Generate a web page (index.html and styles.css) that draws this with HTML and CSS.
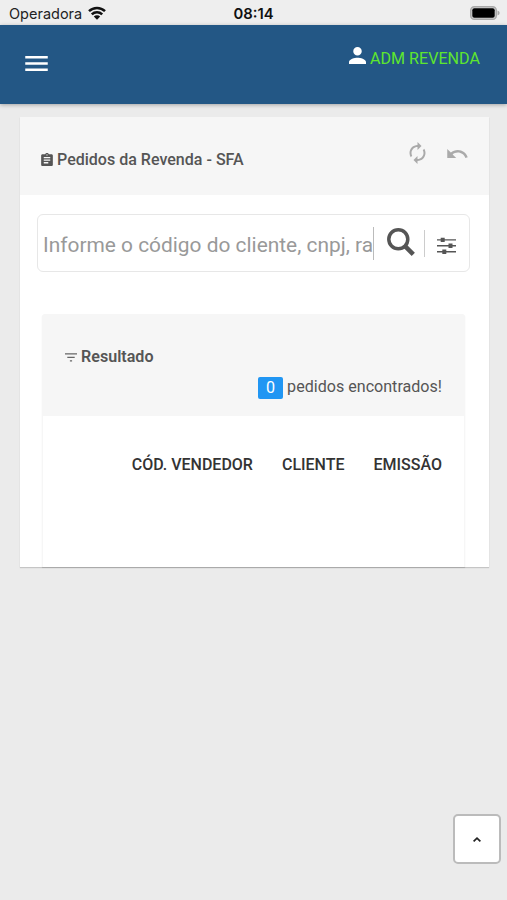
FILE: index.html
```html
<!DOCTYPE html>
<html lang="pt-BR">
<head>
<meta charset="utf-8">
<title>Pedidos da Revenda - SFA</title>
<link rel="stylesheet" href="styles.css">
</head>
<body>
<div class="status">
  <div class="carrier"><span>Operadora</span>
    <svg class="wifi" viewBox="0 0 18 14" fill="none" stroke="#111" stroke-width="2.5"><path d="M1 5.2a11.6 11.6 0 0 1 16 0M3.8 8.3a7.5 7.5 0 0 1 10.4 0"/><path d="M9 13.8L5.8 10.6a4.6 4.6 0 0 1 6.4 0z" fill="#111" stroke="none"/></svg>
  </div>
  <time class="clock">08:14</time>
  <svg class="battery" viewBox="0 0 30 14"><rect x=".75" y=".75" width="25.5" height="12.5" rx="3.6" fill="#d4d4d4" stroke="#a9a9a9" stroke-width="1.5"/><rect x="2.3" y="2.3" width="22.4" height="9.4" rx="2" fill="#000"/><path d="M27.5 4.6q2.2.8 2.2 2.4t-2.2 2.4z" fill="#a9a9a9"/></svg>
</div>
<header class="bar">
  <svg class="menu" viewBox="3 6 18 12" fill="#fff"><path d="M3 18h18v-2H3v2zm0-5h18v-2H3v2zm0-7v2h18V6H3z"/></svg>
  <div class="user">
    <svg class="person" viewBox="4 4 16 16" fill="#fff"><path d="M12 12c2.21 0 4-1.79 4-4s-1.79-4-4-4-4 1.79-4 4 1.79 4 4 4zm0 2c-2.67 0-8 1.34-8 4v2h16v-2c0-2.66-5.33-4-8-4z"/></svg>
    <span>ADM REVENDA</span>
  </div>
</header>
<main class="card">
  <div class="card-head">
    <svg class="clip" viewBox="3 1 18 20" fill="#555"><path d="M19 3h-4.180C14.4 1.840 13.3 1 12 1c-1.300 0-2.400.840-2.820 2H5c-1.100 0-2 .900-2 2v14c0 1.100.900 2 2 2h14c1.100 0 2-.900 2-2V5c0-1.100-.900-2-2-2zm-7 0c.550 0 1 .450 1 1s-.450 1-1 1-1-.450-1-1 .450-1 1-1zm2 14H7v-2h7v2zm3-4H7v-2h10v2zm0-4H7V7h10v2z"/></svg>
    <h1 class="title">Pedidos da Revenda - SFA</h1>
    <div class="actions">
      <svg class="renew" viewBox="4 1 16 22" fill="#aaa"><path d="M12 6v3l4-4-4-4v3c-4.420 0-8 3.580-8 8 0 1.570.460 3.030 1.240 4.260L6.700 14.800C6.250 13.970 6 13.010 6 12c0-3.310 2.690-6 6-6zm6.760 1.740L17.300 9.200c.440.840.700 1.790.700 2.800 0 3.310-2.690 6-6 6v-3l-4 4 4 4v-3c4.420 0 8-3.580 8-8 0-1.570-.460-3.030-1.240-4.260z"/></svg>
      <svg class="undo" viewBox="2 7 20.5 9" fill="#aaa"><path d="M12.500 8c-2.650 0-5.050.990-6.900 2.600L2 7v9h9l-3.620-3.620c1.390-1.160 3.160-1.880 5.120-1.880 3.540 0 6.550 2.310 7.600 5.500l2.370-.780C21.080 11.030 17.150 8 12.500 8z"/></svg>
    </div>
  </div>
  <div class="search">
    <div class="field">Informe o código do cliente, cnpj, ra</div>
    <svg class="glass" viewBox="0 0 28 28" fill="none" stroke="#555"><circle cx="11.300" cy="11.300" r="9.500" stroke-width="3.500"/><path d="M18.300 18.300L26.300 26.300" stroke-width="4.500"/></svg>
    <span class="rule"></span>
    <svg class="tune" viewBox="0 0 19 17" fill="#555"><path d="M0 2.200h19v1.400H0zM0 8.100h19v1.400H0zM0 14h19v1.400H0z"/><path d="M3.700.7h4v4.400h-4zM11.500 6.600h4V11h-4zM5.300 12.500h4v4.400h-4z"/></svg>
  </div>
  <section class="result">
    <div class="result-head">
      <div class="result-title">
        <svg class="filter" viewBox="0 0 12 9" fill="#666"><path d="M0 .3h12v1.300H0zM2.300 3.800h7.400v1.300H2.300zM4.900 7.300h2.200v1.300H4.900z"/></svg>
        <h2>Resultado</h2>
      </div>
      <div class="count"><span class="badge">0</span><span class="found">pedidos encontrados!</span></div>
    </div>
    <div class="columns"><span class="c1">CÓD. VENDEDOR</span><span class="c2">CLIENTE</span><span class="c3">EMISSÃO</span></div>
  </section>
</main>
<button class="top" type="button" aria-label="Topo"><svg viewBox="0 0 8 5" fill="none" stroke="#222" stroke-width="1.700"><path d="M.6 4.400L4 1.200l3.400 3.200"/></svg></button>
</body>
</html>
```
FILE: styles.css
```css
* { box-sizing: border-box; }
body { margin: 0; height: 900px; overflow: hidden; background: #ebebeb; font-family: Roboto, sans-serif; color: #555; }
svg { display: block; flex: none; }
h1, h2 { margin: 0; }
.status { height: 25px; padding: 2px 7px 0 9px; display: grid; grid-template-columns: 1fr auto 1fr; align-items: center; background: #eee; font-family: Inter, sans-serif; color: #222; }
.carrier { display: flex; align-items: center; gap: 6px; font-size: 14.5px; white-space: nowrap; }
.wifi { width: 18px; height: 14px; margin-top: -2px; }
.clock { margin-left: -2px; font-size: 14.8px; font-weight: 600; color: #111; }
.battery { width: 30px; height: 14px; margin-top: -2px; justify-self: end; }
.bar { height: 79px; padding: 0 27px 0 25px; display: flex; justify-content: space-between; background: #235785; box-shadow: 0 1px 4px rgba(0,0,0,.3); }
.menu { width: 23px; height: 15px; margin-top: 31px; }
.user { display: flex; align-items: flex-start; gap: 4px; margin-top: 22px; color: #5ee62e; font-size: 16.1px; line-height: 24px; white-space: nowrap; }
.user span { width: 110px; }
.person { width: 17px; height: 17px; }
.card { width: 469px; height: 450px; margin: 13px 0 0 20px; background: #fff; box-shadow: 0 1px 1px rgba(0,0,0,.16); }
.card-head { height: 78px; padding: 0 21px 0 21px; display: flex; align-items: center; background: #f6f6f6; }
.clip { width: 12px; height: 13px; margin: 6px 4px 0 0; }
.title { margin-top: 6px; font-size: 16.05px; font-weight: 500; white-space: nowrap; }
.actions { display: flex; align-items: center; gap: 21px; margin: -6px 0 0 auto; }
.renew { width: 17px; height: 22px; }
.undo { width: 21px; height: 9px; }
.search { width: 433px; height: 58px; margin: 19px 0 0 17px; padding-left: 5px; display: flex; align-items: center; border: 1.5px solid #e7e7e7; border-radius: 6px; }
.field { width: 331px; height: 33px; border-right: 1px solid #bbb; color: #999; font-size: 20.9px; line-height: 36px; white-space: nowrap; }
.glass { width: 28px; height: 28px; margin: -2px 0 0 13px; }
.rule { width: 1px; height: 27px; margin-left: 9px; background: #ccc; }
.tune { width: 19px; height: 17px; margin: 4px 0 0 12px; }
.result { width: 423px; height: 253px; margin: 42px 0 0 22px; border: 1px solid #f6f6f6; border-bottom: 0; border-radius: 3px 3px 0 0; box-shadow: 0 1px 1px rgba(0,0,0,.15); }
.result-head { height: 101px; padding: 32px 22px 0; background: #f6f6f6; }
.result-title { display: flex; align-items: center; gap: 4px; height: 20px; }
.filter { width: 12px; height: 9px; }
.result-title h2 { font-size: 16.1px; font-weight: 600; line-height: 20px; }
.count { display: flex; align-items: center; justify-content: flex-end; gap: 4px; height: 22px; margin-top: 10px; font-size: 16.1px; white-space: nowrap; }
.found { line-height: 20px; margin-top: -2px; }
.badge { width: 25px; height: 22px; border-radius: 2px; background: #2196f3; color: #fff; line-height: 22px; text-align: center; }
.columns { display: flex; justify-content: flex-end; gap: 29px; padding: 39px 22px 0 0; color: #333; font-size: 16px; font-weight: 500; line-height: 20px; white-space: nowrap; }
.top { position: absolute; left: 453px; top: 814px; width: 48px; height: 50px; padding: 0; display: grid; place-items: center; border: 2px solid #bbb; border-radius: 5px; background: #fff; }
.top svg { width: 8px; height: 5px; }
```
